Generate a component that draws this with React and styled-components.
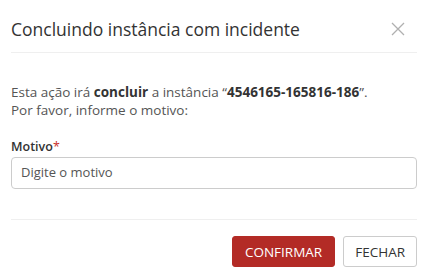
import React from "react";
import styled, { createGlobalStyle } from "styled-components";

const Global = createGlobalStyle`
  html, body { margin: 0; padding: 0; background: #fff; }
  body { font-family: "Open Sans", "Noto Sans", sans-serif; color: #333; }
  * { box-sizing: border-box; }
`;

const Modal = styled.div`
  width: 430px;
  padding: 0 13px 0 11px;
  background: #fff;
`;

const Header = styled.div`
  display: flex;
  align-items: center;
  justify-content: space-between;
  padding: 17px 0 11px;
  border-bottom: 1px solid #efefef;
`;

const Title = styled.h4`
  margin: 0;
  font-size: 17.5px;
  line-height: 24px;
  font-weight: 400;
  color: #333;
`;

const Close = styled.button`
  border: 0;
  background: none;
  padding: 0;
  margin-right: 12px;
  width: 15px;
  height: 15px;
  display: flex;
  align-items: center;
  justify-content: center;
  cursor: pointer;
`;

const Body = styled.div`
  padding: 30px 0 30px;
  border-bottom: 1px solid #efefef;
`;

const Message = styled.p`
  margin: 0;
  font-size: 13.5px;
  line-height: 18px;
  color: #555;
  b { font-weight: 700; color: #333; }
`;

const Field = styled.div`
  margin-top: 19px;
  display: flex;
  flex-direction: column;
  gap: 1px;
`;

const Label = styled.label`
  font-size: 12.5px;
  line-height: 18px;
  font-weight: 600;
  color: #333;
  span { color: #c9302c; font-weight: 400; }
`;

const Input = styled.input`
  width: 100%;
  height: 32px;
  border: 1px solid #ccc;
  border-radius: 4px;
  padding: 0 9px 2px;
  font-family: inherit;
  font-size: 13px;
  color: #555;
  outline: none;
  &::placeholder { color: #555; opacity: 1; }
`;

const Footer = styled.div`
  display: flex;
  justify-content: flex-end;
  gap: 8px;
  padding: 16px 0 10px;
`;

const Button = styled.button`
  height: 31px;
  padding: 0 ${(p) => (p.$primary ? "12px" : "11px")};
  border-radius: 3px;
  border: 1px solid ${(p) => (p.$primary ? "#b32b26" : "#ccc")};
  background: ${(p) => (p.$primary ? "#b32b26" : "#fff")};
  color: ${(p) => (p.$primary ? "#fff" : "#333")};
  font-family: inherit;
  font-size: 13.5px;
  line-height: 18px;
  text-transform: uppercase;
  cursor: pointer;
`;

export default function App() {
  return (
    <>
      <Global />
      <Modal>
        <Header>
          <Title>Concluindo instância com incidente</Title>
          <Close aria-label="Fechar">
            <svg width="14" height="14" viewBox="0 0 14 14">
              <path d="M1 1L13 13M13 1L1 13" stroke="#b0b0b0" strokeWidth="1.3" fill="none" />
            </svg>
          </Close>
        </Header>
        <Body>
          <Message>
            Esta ação irá <b>concluir</b> a instância “<b>4546165-165816-186</b>”.
            <br />
            Por favor, informe o motivo:
          </Message>
          <Field>
            <Label>
              Motivo<span>*</span>
            </Label>
            <Input placeholder="Digite o motivo" />
          </Field>
        </Body>
        <Footer>
          <Button $primary>Confirmar</Button>
          <Button>Fechar</Button>
        </Footer>
      </Modal>
    </>
  );
}
